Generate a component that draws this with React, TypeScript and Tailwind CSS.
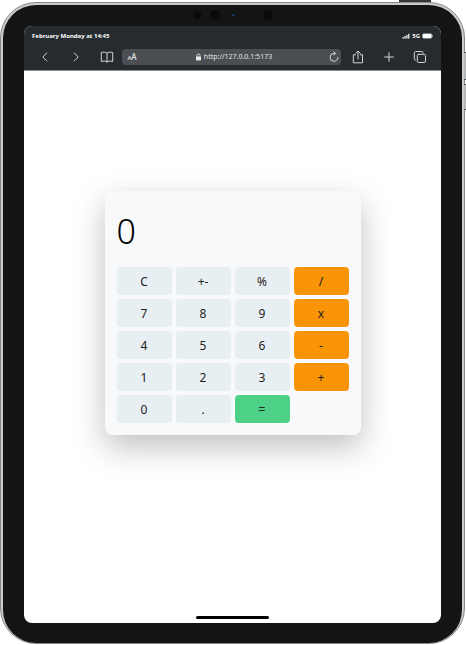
import { useState } from "react";

type Kind = "plain" | "operator" | "equals";

const keys: { label: string; kind: Kind }[] = [
  { label: "C", kind: "plain" },
  { label: "+-", kind: "plain" },
  { label: "%", kind: "plain" },
  { label: "/", kind: "operator" },
  { label: "7", kind: "plain" },
  { label: "8", kind: "plain" },
  { label: "9", kind: "plain" },
  { label: "x", kind: "operator" },
  { label: "4", kind: "plain" },
  { label: "5", kind: "plain" },
  { label: "6", kind: "plain" },
  { label: "-", kind: "operator" },
  { label: "1", kind: "plain" },
  { label: "2", kind: "plain" },
  { label: "3", kind: "plain" },
  { label: "+", kind: "operator" },
  { label: "0", kind: "plain" },
  { label: ".", kind: "plain" },
  { label: "=", kind: "equals" },
];

const keyColors: Record<Kind, string> = {
  plain: "bg-[#e8eff2]",
  operator: "bg-[#f99406]",
  equals: "bg-[#4dd187]",
};

function Calculator() {
  const [value, setValue] = useState("0");

  const press = (label: string) => {
    if (label === "C") setValue("0");
    else if (/[0-9]/.test(label)) setValue(value === "0" ? label : value + label);
    else if (label === "." && !value.includes(".")) setValue(value + ".");
  };

  return (
    <section className="w-64 rounded-lg bg-[#f7f9fb] p-3 shadow-[0_12px_32px_rgba(0,0,0,0.25)]">
      <output className="block h-16 overflow-hidden text-[34px] leading-14 font-light text-black">{value}</output>
      <div className="grid grid-cols-4 gap-1">
        {keys.map((key) => (
          <button
            key={key.label}
            type="button"
            onClick={() => press(key.label)}
            className={`h-7 rounded pt-0.5 text-xs leading-4 text-[#222] ${keyColors[key.kind]}`}
          >
            {key.label}
          </button>
        ))}
      </div>
    </section>
  );
}

function StatusBar() {
  return (
    <div className="flex h-5 items-center justify-between px-2 text-[6px] leading-2 font-bold text-white">
      <span>February Monday at 14:45</span>
      <span className="flex items-center gap-0.5">
        <svg viewBox="0 0 8 6" className="h-1.5 w-2" fill="#fff">
          <rect x="0.5" y="4" width="1.2" height="1.6" />
          <rect x="2.4" y="3" width="1.2" height="2.6" />
          <rect x="4.3" y="2" width="1.2" height="3.6" />
          <rect x="6.2" y="0.8" width="1.2" height="4.8" />
        </svg>
        <span>5G</span>
        <svg viewBox="0 0 11 6" className="h-1.5 w-[11px]">
          <rect x="0.5" y="0.7" width="9.3" height="4.6" rx="1.2" fill="#fff" stroke="#a5a7a9" strokeWidth="0.6" />
          <rect x="10.2" y="2" width="0.8" height="2" rx="0.4" fill="#c5c6c7" />
        </svg>
      </span>
    </div>
  );
}

function NavBar() {
  const icon = "h-3.5 w-3.5";
  const stroke = { fill: "none", stroke: "#d4d5d6", strokeLinecap: "round", strokeLinejoin: "round" } as const;
  return (
    <nav className="flex h-6 items-center px-3.5 pb-0.5">
      <div className="flex gap-[17px] pr-2">
        <button type="button" aria-label="Back">
          <svg viewBox="0 0 14 14" className={icon} {...stroke}>
            <path d="M8.800 3 4.800 7l4 4" />
          </svg>
        </button>
        <button type="button" aria-label="Forward">
          <svg viewBox="0 0 14 14" className={icon} {...stroke}>
            <path d="m5.200 3 4 4-4 4" />
          </svg>
        </button>
        <button type="button" aria-label="Bookmarks">
          <svg viewBox="0 0 14 14" className={icon} {...stroke}>
            <path d="M7 3.300C6 2 3.500 1.800 1.300 2.500v9C3.500 10.800 6 10.900 7 12c1-1.100 3.500-1.200 5.700-.5v-9C10.500 1.800 8 2 7 3.300V12" />
          </svg>
        </button>
      </div>
      <div className="flex h-4 flex-1 items-center rounded bg-[#4b4e53] pr-0.5 pl-1 text-[#e6e6e7]">
        <button type="button" className="w-3 text-[8px] leading-3 font-medium">
          <span className="text-[6px]">A</span>A
        </button>
        <div className="flex flex-1 items-center justify-center gap-0.5 text-[7px] leading-3">
          <svg viewBox="0 0 7 8" className="h-2 w-[7px]">
            <rect x="1" y="3.500" width="5" height="4" rx="0.700" fill="#e6e6e7" />
            <path d="M2 4V2.400a1.500 1.500 0 0 1 3 0V4" fill="none" stroke="#e6e6e7" strokeWidth="0.900" />
          </svg>
          <span>http://127.0.0.1:5173</span>
        </div>
        <button type="button" aria-label="Reload">
          <svg viewBox="0 0 10 12" className="h-3 w-2.5" {...stroke}>
            <path d="M9 6.300a4 4 0 1 1-4-4h1M4.800.7l1.800 1.600-1.800 1.800" />
          </svg>
        </button>
      </div>
      <div className="flex gap-[17px] pl-2.5">
        <button type="button" aria-label="Share">
          <svg viewBox="0 0 14 14" className={icon} {...stroke}>
            <path d="M4.600 4.800H2.300v8h9.200v-8H9.200M7 9V1.200M4.800 3.300 7 1.100l2.200 2.200" />
          </svg>
        </button>
        <button type="button" aria-label="New tab">
          <svg viewBox="0 0 14 14" className={icon} {...stroke}>
            <path d="M7 2.700v8.600M2.700 7h8.600" />
          </svg>
        </button>
        <button type="button" aria-label="Tabs">
          <svg viewBox="0 0 14 14" className={icon} {...stroke}>
            <rect x="4.300" y="4.300" width="8.200" height="8.200" rx="1.300" />
            <path d="M2.700 10.200c-.8 0-1.400-.5-1.400-1.300V3c0-.9.600-1.500 1.500-1.500h6c.9 0 1.400.6 1.400 1.400" />
          </svg>
        </button>
      </div>
    </nav>
  );
}

function Cameras() {
  return (
    <svg viewBox="0 0 80 12" className="mx-auto h-3 w-20">
      <circle cx="4.500" cy="5" r="4" fill="#090b0b" />
      <circle cx="22.500" cy="5" r="5" fill="#090b0b" />
      <circle cx="40" cy="5" r="2.500" fill="#0a0d12" />
      <path d="M38.500 5h3" stroke="#245083" strokeWidth="1.500" />
      <circle cx="57.500" cy="5" r="1" fill="#090b0b" />
      <circle cx="75" cy="5" r="5" fill="#090b0b" />
    </svg>
  );
}

export default function App() {
  return (
    <div className="relative h-screen overflow-hidden bg-white pt-0.5 pr-px pb-px font-['Noto_Sans','Open_Sans',sans-serif]">
      <div className="absolute top-0 right-[35px] h-0.5 w-8 bg-[#34363a]" />
      <div className="absolute top-[52px] right-0 h-7 w-0.5 border-y border-[#55585a] bg-[#b5b7b8]" />
      <div className="absolute top-[84px] right-0 h-[26px] w-0.5 border-y border-[#55585a] bg-[#b5b7b8]" />
      <div className="h-full rounded-[36px] border border-[#85898a] bg-[#c9cccc] px-0.5 pt-0.5">
        <div className="flex h-full flex-col rounded-[33px] bg-[#141414] px-[21px] pb-5">
          <div className="flex h-[21px] shrink-0 items-center">
            <Cameras />
          </div>
          <div className="flex min-h-0 flex-1 flex-col overflow-hidden rounded-lg bg-white">
            <header className="border-b border-[#8b8e90] bg-[#262b2f]">
              <StatusBar />
              <NavBar />
            </header>
            <main className="flex flex-1 items-center justify-center pb-[62px]">
              <Calculator />
            </main>
            <div className="mx-auto mb-1 h-[3px] w-[73px] rounded-full bg-black" />
          </div>
        </div>
      </div>
    </div>
  );
}
